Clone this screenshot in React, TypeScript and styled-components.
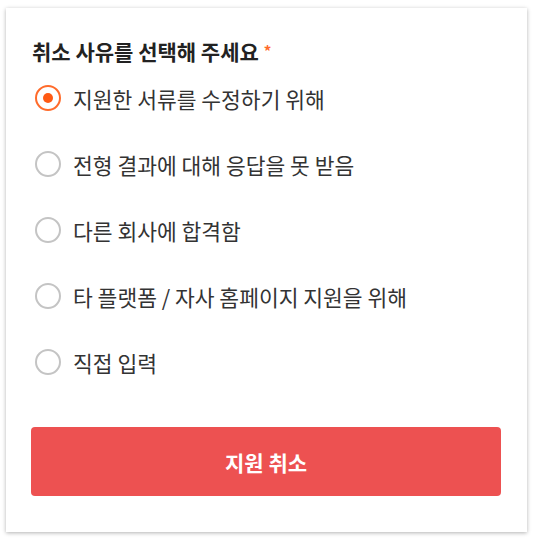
import { useState } from 'react';
import styled, { createGlobalStyle } from 'styled-components';

const GlobalStyle = createGlobalStyle`
  body {
    margin: 0;
    background: #ffffff;
    font-family: "Noto Sans CJK KR", "Noto Sans", sans-serif;
  }
`;

const Page = styled.div`
  padding: 8px 8px 9px 6px;
  width: 535px;
  box-sizing: border-box;
`;

const Card = styled.form`
  background: #ffffff;
  box-shadow: 0 1px 4px rgba(0, 0, 0, 0.3);
  padding: 28px 26px 36px 25px;
  display: flex;
  flex-direction: column;
`;

const Title = styled.h2`
  margin: 0 0 0 1px;
  font-size: 21px;
  font-weight: 700;
  color: #222222;
  line-height: 30px;
`;

const Required = styled.span`
  color: #ff6b2b;
  font-size: 15px;
  margin-left: 5px;
  vertical-align: top;
`;

const OptionList = styled.div`
  display: flex;
  flex-direction: column;
  margin-top: -1px;
`;

const Option = styled.label`
  display: flex;
  align-items: center;
  gap: 12px;
  height: 66px;
  cursor: pointer;
  font-size: 21.5px;
  color: #333333;
`;

const RadioCircle = styled.span<{ $checked: boolean }>`
  flex: none;
  width: 26px;
  height: 26px;
  margin-left: 4px;
  box-sizing: border-box;
  border-radius: 50%;
  border: 2px solid ${(p) => (p.$checked ? '#ff6b2b' : '#c4c4c4')};
  display: flex;
  align-items: center;
  justify-content: center;

  &::after {
    content: '';
    width: 10px;
    height: 10px;
    border-radius: 50%;
    background: ${(p) => (p.$checked ? '#ff5a14' : 'transparent')};
  }
`;

const HiddenInput = styled.input`
  display: none;
`;

const SubmitButton = styled.button`
  margin-top: 32px;
  height: 69px;
  border: none;
  border-radius: 4px;
  background: #ed5151;
  color: #ffffff;
  font-family: inherit;
  font-size: 21px;
  font-weight: 700;
  cursor: pointer;
`;

const reasons = [
  '지원한 서류를 수정하기 위해',
  '전형 결과에 대해 응답을 못 받음',
  '다른 회사에 합격함',
  '타 플랫폼 / 자사 홈페이지 지원을 위해',
  '직접 입력',
];

export default function App() {
  const [selected, setSelected] = useState(0);

  return (
    <>
      <GlobalStyle />
      <Page>
        <Card onSubmit={(e) => e.preventDefault()}>
          <Title>
            취소 사유를 선택해 주세요
            <Required>*</Required>
          </Title>
          <OptionList>
            {reasons.map((reason, i) => (
              <Option key={reason}>
                <HiddenInput
                  type="radio"
                  name="reason"
                  checked={selected === i}
                  onChange={() => setSelected(i)}
                />
                <RadioCircle $checked={selected === i} />
                {reason}
              </Option>
            ))}
          </OptionList>
          <SubmitButton type="submit">지원 취소</SubmitButton>
        </Card>
      </Page>
    </>
  );
}
